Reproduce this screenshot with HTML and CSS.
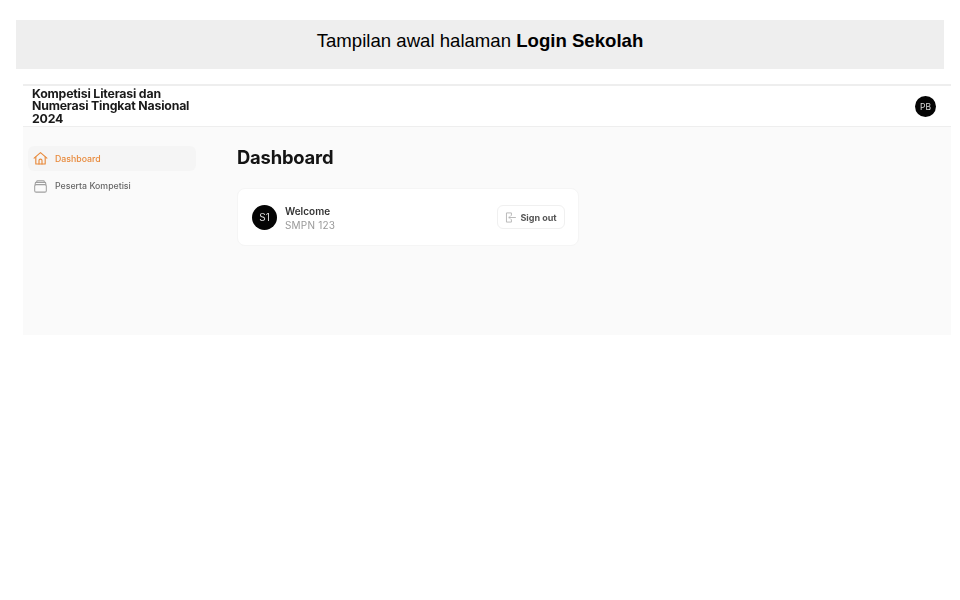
FILE: index.html
```html
<!DOCTYPE html>
<html>
	<head>
		<title>Login Sekolah</title>
		<link rel="stylesheet" href="styles.css">
	</head>

	<body>
		<div class="caption">Tampilan awal halaman <b>Login Sekolah</b></div>

		<div class="app">
			<div class="topbar">
				<div class="brand">Kompetisi Literasi dan Numerasi Tingkat Nasional 2024</div>
				<div class="avatarSmall">PB</div>
			</div>

			<div class="main">
				<div class="sidebar">
					<div class="navItem active">
						<svg class="navIcon" viewBox="0 0 16 16" fill="none" stroke="#e8893a" stroke-width="1.2" stroke-linejoin="round" stroke-linecap="round">
							<path d="M1.2 7.6 8 1.8l6.8 5.8"/>
							<path d="M3 6.4v7.4h10V6.4"/>
							<path d="M6.4 13.8V10.2a1.6 1.6 0 0 1 3.2 0v3.6"/>
						</svg>
						<span>Dashboard</span>
					</div>
					<div class="navItem">
						<svg class="navIcon" viewBox="0 0 16 16" fill="none" stroke="#a0a0a0" stroke-width="1.1" stroke-linejoin="round" stroke-linecap="round">
							<rect x="1.8" y="6" width="12.4" height="8" rx="1.5"/>
							<path d="M2.4 6V4.6a1 1 0 0 1 1-1h9.2a1 1 0 0 1 1 1V6"/>
							<path d="M4 3.6V2.6a.8.8 0 0 1 .8-.8h6.4a.8.8 0 0 1 .8.8v1"/>
						</svg>
						<span>Peserta Kompetisi</span>
					</div>
				</div>

				<div class="content">
					<h1>Dashboard</h1>
					<div class="card">
						<div class="avatar">S1</div>
						<div class="who">
							<div class="welcome">Welcome</div>
							<div class="school">SMPN 123</div>
						</div>
						<button class="signOut">
							<svg class="outIcon" viewBox="0 0 12 12" fill="none" stroke="#b5b5b5" stroke-width="1" stroke-linejoin="round" stroke-linecap="round">
								<path d="M7 3.6V1H1.6v10H7V8.4"/>
								<path d="M4.4 6h7M4.4 6l1.4-1.4M4.4 6l1.4 1.4"/>
							</svg>
							Sign out
						</button>
					</div>
				</div>
			</div>
		</div>
	</body>
</html>
```

FILE: styles.css
```css
body {
	margin: 0;
	padding: 20px 9px 0 16px;
	background: white;
	font-family: "Inter", "Liberation Sans", sans-serif;
}

.caption {
	width: 928px;
	height: 49px;
	line-height: 42px;
	background: #eeeeee;
	text-align: center;
	font-family: "Liberation Sans", sans-serif;
	font-size: 18.6px;
	color: black;
}

/* the reference shows this part as a scaled down shot, so a slight blur */
.app {
	margin: 15px 0 0 7px;
	height: 251px;
	background: #fafafa;
	display: flex;
	flex-direction: column;
	filter: blur(0.35px);
}

.topbar {
	height: 43px;
	flex-shrink: 0;
	box-sizing: border-box;
	padding: 1px 15px 0 9px;
	display: flex;
	align-items: center;
	justify-content: space-between;
	background: white;
	border-top: 2px solid #eeeeee;
	border-bottom: 1px solid #eeeeee;
}

.brand {
	width: 165px;
	font-size: 12.3px;
	line-height: 12.6px;
	font-weight: 700;
	letter-spacing: -0.18px;
	color: #1a1a1a;
}

.avatarSmall {
	width: 21px;
	height: 21px;
	border-radius: 50%;
	background: #050505;
	color: #dddddd;
	font-size: 8.5px;
	display: flex;
	align-items: center;
	justify-content: center;
}

.main {
	display: flex;
	flex: 1;
}

.sidebar {
	width: 168px;
	padding: 19px 0 0 5px;
	flex-shrink: 0;
	display: flex;
	flex-direction: column;
	gap: 3px;
}

.navItem {
	height: 25px;
	display: flex;
	align-items: center;
	gap: 7px;
	padding-left: 5px;
	border-radius: 6px;
	font-size: 8.75px;
	font-weight: 500;
	color: #666666;
}

.navItem + .navItem {
	height: 24px;
}

.navItem.active {
	background: #f5f5f5;
	color: #e8893a;
}

.navIcon {
	width: 15px;
	height: 15px;
}

.content {
	margin-left: 41px;
	padding-top: 17px;
	width: 342px;
}

h1 {
	margin: 0 0 18px 0;
	font-size: 18.4px;
	line-height: 26px;
	font-weight: 700;
	letter-spacing: -0.2px;
	color: #141414;
}

.card {
	height: 58px;
	box-sizing: border-box;
	padding: 0 13px 0 14px;
	display: flex;
	align-items: center;
	gap: 8px;
	background: white;
	border: 1px solid #f5f5f5;
	border-radius: 8px;
}

.avatar {
	width: 25px;
	height: 25px;
	border-radius: 50%;
	background: #050505;
	color: #dddddd;
	font-size: 10px;
	display: flex;
	align-items: center;
	justify-content: center;
}

.who {
	flex: 1;
	padding-top: 2px;
}

.welcome {
	font-size: 10px;
	line-height: 14px;
	font-weight: 600;
	color: #333333;
}

.school {
	font-size: 10px;
	line-height: 15px;
	letter-spacing: 0.2px;
	color: #999999;
}

.signOut {
	width: 68px;
	height: 24px;
	padding: 0;
	display: flex;
	align-items: center;
	justify-content: center;
	gap: 4px;
	background: white;
	border: 1px solid #f0f0f0;
	border-radius: 6px;
	font-family: inherit;
	font-size: 9px;
	font-weight: 700;
	color: #555555;
}

.outIcon {
	width: 11px;
	height: 11px;
}
```
